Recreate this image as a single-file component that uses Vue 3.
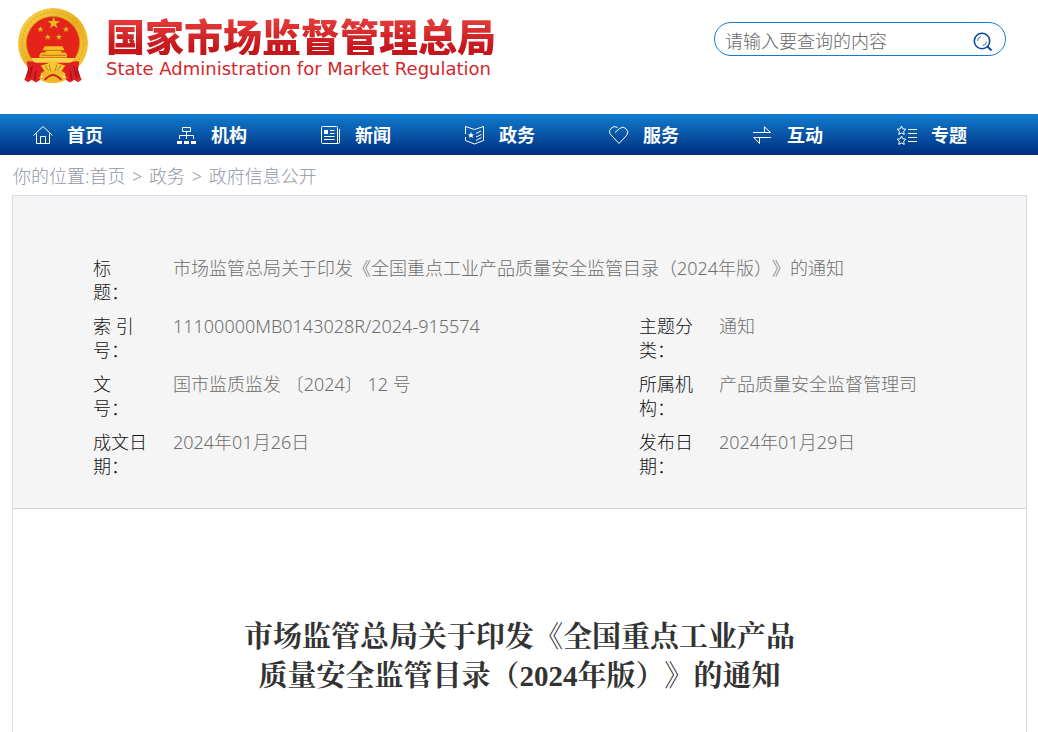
<template>
  <div class="page">
    <header class="site-header">
      <a class="brand" href="#" aria-label="国家市场监督管理总局">
        <svg class="emblem" viewBox="25 25 200 214" aria-hidden="true">
          <defs>
            <linearGradient id="gold" x1="0" y1="0" x2="1" y2="1">
              <stop offset="0" stop-color="#f8d64e" />
              <stop offset="0.5" stop-color="#e9ad1f" />
              <stop offset="1" stop-color="#f7cf3c" />
            </linearGradient>
          </defs>
          <circle cx="125" cy="125" r="100" fill="url(#gold)" />
          <circle cx="125" cy="125" r="88" fill="none" stroke="#e2a420" stroke-width="3" stroke-dasharray="6 5" />
          <circle cx="125" cy="125" r="76" fill="#e5231b" stroke="#c98a14" stroke-width="2" />
          <g fill="#f2b824" stroke="#a95e10" stroke-width="1">
            <polygon :points="starPoints(127, 68, 19)" />
            <polygon :points="starPoints(89, 86, 10)" />
            <polygon :points="starPoints(162, 86, 10)" />
            <polygon :points="starPoints(110, 108, 10)" />
            <polygon :points="starPoints(142, 108, 10)" />
          </g>
          <path d="M101 134H152L158 146H95ZM104 146H149V152H104ZM91 152H161L166 160H86ZM86 160H165V166H86Z" fill="#f4bd24" />
          <path d="M98 146H155M91 160H162" stroke="#a75810" stroke-width="2" />
          <path d="M62 168H188L178 181H72Z" fill="#f9d34a" />
          <g transform="translate(-4 -8)">
            <path d="M54 186Q73 181 96 198L112 207L94 219L93 238L80 246L68 238L58 245L47 238L58 212ZM204 186Q185 181 162 198L146 207L164 219L165 238L178 246L190 238L200 245L211 238L200 212Z" fill="#dd2024" />
            <path d="M61 203L54 229M70 199L61 232M80 213L76 238M197 203L204 229M188 199L197 232M178 213L182 238" stroke="#a90d17" stroke-width="4" />
            <path d="M94 197L112 192L129 184L146 192L164 197L155 211L141 216H117L103 211Z" fill="#f5c934" />
            <path d="M107 197L117 213M118 195L124 215M140 195L134 215M151 197L141 213" stroke="#ca7d18" stroke-width="3" />
            <path d="M87 231Q105 233 117 216Q129 210 141 216Q153 233 171 231L161 241Q129 254 97 241Z" fill="#efb925" />
            <path d="M105 238Q116 226 129 224Q142 226 153 238" fill="none" stroke="#c8201b" stroke-width="5" />
          </g>
        </svg>
        <span class="brand-text">
          <span class="brand-name">国家市场监督管理总局</span>
          <span class="brand-en">State Administration for Market Regulation</span>
        </span>
      </a>

      <form class="search" role="search" @submit.prevent>
        <input
          v-model="keyword"
          class="search-input"
          type="text"
          placeholder="请输入要查询的内容"
          aria-label="请输入要查询的内容"
        />
        <button class="search-button" type="submit" aria-label="查询">
          <svg width="20" height="20" viewBox="0 0 20 20" fill="none" stroke="#0a4a9c">
            <circle cx="9" cy="9" r="7.7" stroke-width="1.6" />
            <path d="M14.5 14.5L18.5 18.5" stroke-width="2" />
            <path d="M4.5 9A4.5 4.5 0 0 1 8 4.6M9.5 13.5A4.5 4.5 0 0 0 13.5 9.5" stroke-width="0.8" />
          </svg>
        </button>
      </form>
    </header>

    <nav class="main-nav">
      <a v-for="item in navItems" :key="item.label" class="nav-item" href="#">
        <svg class="nav-icon" width="22" height="20" viewBox="0 0 22 20" aria-hidden="true">
          <path :d="item.line" />
          <path v-if="item.solid" class="solid" :d="item.solid" />
        </svg>
        <span>{{ item.label }}</span>
      </a>
    </nav>

    <div class="breadcrumb">
      <span>你的位置:</span><a href="#">首页</a> &gt; <a href="#">政务</a> &gt; <a href="#">政府信息公开</a>
    </div>

    <main class="document">
      <section class="info-panel">
        <table class="info-table">
          <colgroup>
            <col class="col-label" />
            <col />
            <col class="col-label" />
            <col class="col-side" />
          </colgroup>
          <tbody>
            <tr v-for="(row, index) in infoRows" :key="index">
              <template v-for="cell in row" :key="cell.label">
                <th scope="row"><div class="label-text">{{ cell.label }}</div></th>
                <td :colspan="row.length === 1 ? 3 : 1">{{ cell.value }}</td>
              </template>
            </tr>
          </tbody>
        </table>
      </section>

      <article class="article">
        <h1 class="article-title">
          市场监管总局关于印发《全国重点工业产品<br />质量安全监管目录（2024年版）》的通知
        </h1>
      </article>
    </main>
  </div>
</template>

<script setup>
import { ref } from 'vue'

const keyword = ref('')

// Points of a five-pointed star around (cx, cy)
const starPoints = (cx, cy, r) => {
  const points = []
  for (let i = 0; i < 10; i++) {
    const radius = i % 2 === 0 ? r : r * 0.4
    const angle = (Math.PI / 5) * i - Math.PI / 2
    points.push(`${(cx + radius * Math.cos(angle)).toFixed(1)},${(cy + radius * Math.sin(angle)).toFixed(1)}`)
  }
  return points.join(' ')
}

// line: stroked part of the icon, solid: filled part
const navItems = [
  {
    label: '首页',
    line: 'M0.5 10.5L10 1.5L19.5 10.5M3.5 8.5V18.5H16.5V8.5M7.5 18.5V11.5H12.5V18.5',
  },
  {
    label: '机构',
    line: 'M5.5 2.5H13.5V6.5H5.5ZM9.5 6.5V14M2.5 14V10.5H16.5V14',
    solid: 'M0 16H5V19H0ZM7 16H12V19H7ZM14 16H19V19H14Z',
  },
  {
    label: '新闻',
    line: 'M1.5 1.5H15.5Q16.5 1.5 16.5 2.5V18.5H1.5Q0.5 18.5 0.5 17.5V2.5Q0.5 1.5 1.5 1.5ZM16.5 18.5H17.5Q18.5 18.5 18.5 17.5V4M9 5.5H13.5M9 8.5H13.5M3 11.5H13.5M3 14.5H13.5',
    solid: 'M3 5H7V9H3Z',
  },
  {
    label: '政务',
    line: 'M0.5 1.5L9.5 4.5L18.5 1.5V15.5L9.5 19L0.5 15.5V12M0.5 1.5V9M11 8.5L16 6M11 12L16.5 9.5M11 15.5L16.5 12.5',
    solid: 'M6 7L6.9 9.2L9.2 9.4L7.4 10.8L8 13L6 11.8L4 13L4.6 10.8L2.8 9.4L5.1 9.2Z',
  },
  {
    label: '服务',
    line: 'M10 18.5L2.2 10.2A5 5 0 0 1 8.5 2.5M6 7.5L10.5 3.5A5 5 0 0 1 17.8 10.2L10 18.5',
  },
  {
    label: '互动',
    line: 'M0 7.5H17.5L11.5 1.8V7M18 12.5H0.8L6.5 18.5V13',
  },
  {
    label: '专题',
    line: 'M4.5 1L5.8 3.8L8.8 4.2L6.7 6.4L7.2 9.4L4.5 8L1.8 9.4L2.3 6.4L0.2 4.2L3.2 3.8ZM4.5 11L5.8 13.8L8.8 14.2L6.7 16.4L7.2 19.4L4.5 18L1.8 19.4L2.3 16.4L0.2 14.2L3.2 13.8ZM11 4.5H20M11 8.5H20M11 12.5H20M11 16.5H20',
  },
]

const infoRows = [
  [{ label: '标 题：', value: '市场监管总局关于印发《全国重点工业产品质量安全监管目录（2024年版）》的通知' }],
  [
    { label: '索 引 号：', value: '11100000MB0143028R/2024-915574' },
    { label: '主题分类：', value: '通知' },
  ],
  [
    { label: '文 号：', value: '国市监质监发 〔2024〕 12 号' },
    { label: '所属机构：', value: '产品质量安全监督管理司' },
  ],
  [
    { label: '成文日期：', value: '2024年01月26日' },
    { label: '发布日期：', value: '2024年01月29日' },
  ],
]
</script>

<style>
body {
  background: #fff;
}
</style>

<style scoped>
.page {
  display: flex;
  flex-direction: column;
  min-height: 100vh;
  font-family: "Noto Sans", "Noto Sans CJK SC", sans-serif;
  font-size: 18px;
  font-weight: 300;
  line-height: 24px;
  text-spacing-trim: space-all;
}

a {
  color: inherit;
  text-decoration: none;
}

/* Header */
.site-header {
  display: flex;
  justify-content: space-between;
  align-items: flex-start;
  box-sizing: border-box;
  min-height: 114px;
  padding: 8px 32px 0 18px;
}

.brand {
  display: flex;
  gap: 18px;
}

.emblem {
  width: 70px;
  height: 75px;
}

.brand-text {
  display: flex;
  flex-direction: column;
  padding-top: 7px;
  white-space: nowrap;
}

.brand-name {
  font-family: "Noto Sans CJK SC", sans-serif;
  font-size: 39px;
  font-weight: 900;
  line-height: 40px;
  color: transparent;
  background: linear-gradient(#e23a38 15%, #c4161b 85%);
  background-clip: text;
}

.brand-en {
  padding-top: 2px;
  font-family: "DejaVu Sans", sans-serif;
  font-size: 18px;
  font-weight: 400;
  line-height: 24px;
  color: #d3282b;
}

.search {
  display: flex;
  align-items: center;
  box-sizing: border-box;
  width: 292px;
  height: 34px;
  margin-top: 14px;
  padding: 4px 12px 0 10px;
  border: 1px solid #1479cf;
  border-radius: 17px;
}

.search-input {
  flex: 1;
  min-width: 0;
  padding: 0;
  border: 0;
  outline: none;
  background: none;
  font: inherit;
  color: #333;
}

.search-input::placeholder {
  color: #666;
}

.search-button {
  display: flex;
  padding: 2px 0 0;
  border: 0;
  background: none;
  cursor: pointer;
}

/* Navigation */
.main-nav {
  display: grid;
  grid-template-columns: repeat(7, 1fr);
  padding: 0 15px;
  background: linear-gradient(#107dd0, #002d7e);
}

.nav-item {
  display: flex;
  align-items: center;
  gap: 12px;
  height: 41px;
  padding-left: 18px;
  font-weight: 700;
  color: #fff;
}

.nav-icon {
  fill: none;
  stroke: #fff;
  stroke-width: 1;
}

.nav-icon .solid {
  fill: #fff;
  stroke: none;
}

.breadcrumb {
  padding: 9px 13px 7px;
  color: #9297a3;
  word-spacing: 2px;
}

/* Document */
.document {
  flex: 1;
  margin: 0 11px 0 12px;
  border: 1px solid #d0dce8;
  border-bottom: 0;
}

.info-panel {
  padding: 60px 80px 20px;
  border-bottom: 1px solid #d2d4d8;
  background: #f5f5f5;
}

.info-table {
  width: 100%;
  table-layout: fixed;
  border-collapse: collapse;
}

.col-label {
  width: 80px;
}

.col-side {
  width: 227px;
}

.info-table th,
.info-table td {
  padding: 0 0 10px;
  text-align: left;
  vertical-align: top;
}

.info-table th {
  font-weight: 300;
  color: #111;
}

.info-table td {
  color: #6e6e6e;
}

.label-text {
  width: 56px;
}

.article {
  padding: 109px 24px 36px;
}

.article-title {
  margin: 0;
  font-family: "Liberation Serif", "Noto Serif CJK SC", "Noto Sans CJK SC", serif;
  font-size: 29px;
  font-weight: 700;
  line-height: 39px;
  text-align: center;
  color: #333;
}
</style>
